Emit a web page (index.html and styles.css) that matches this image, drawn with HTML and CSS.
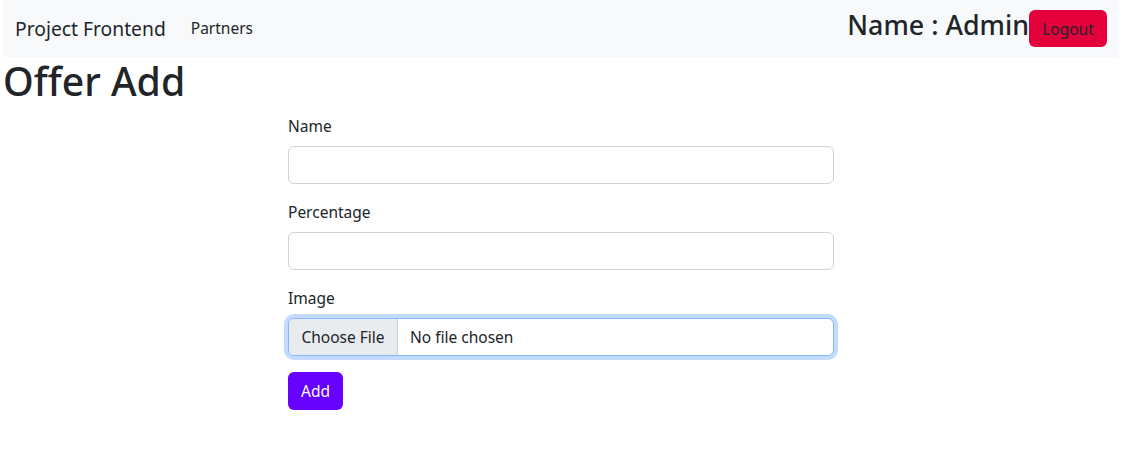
FILE: index.html
```html
<!DOCTYPE html>
<html lang="en">
<head>
<meta charset="utf-8">
<title>Offer Add</title>
<link rel="stylesheet" href="styles.css">
</head>
<body>
<div class="page">
  <nav class="navbar">
    <div class="nav-left">
      <a class="brand" href="#">Project Frontend</a>
      <a class="nav-link" href="#">Partners</a>
    </div>
    <div class="nav-right">
      <h3 class="user-name">Name : Admin</h3>
      <button class="btn btn-logout" type="button">Logout</button>
    </div>
  </nav>
  <h1 class="title">Offer Add</h1>
  <form class="offer-form">
    <div class="field">
      <label class="form-label">Name</label>
      <div class="form-control"></div>
    </div>
    <div class="field">
      <label class="form-label">Percentage</label>
      <div class="form-control"></div>
    </div>
    <div class="field">
      <label class="form-label">Image</label>
      <div class="form-control file-control">
        <span class="file-btn">Choose File</span>
        <span class="file-name">No file chosen</span>
      </div>
    </div>
    <button class="btn btn-add" type="button">Add</button>
  </form>
</div>
</body>
</html>
```

FILE: styles.css
```css
* { box-sizing: border-box; }

html, body {
  margin: 0;
  padding: 0;
  background: #ffffff;
}

body {
  font-family: "Noto Sans", "Liberation Sans", sans-serif;
  font-size: 15.5px;
  line-height: 1.5;
  color: #212529;
}

.page {
  width: 1116px;
  margin-left: 3px;
}

.navbar {
  height: 57px;
  background: #f8f9fa;
  display: flex;
  align-items: center;
  justify-content: space-between;
  padding: 0 12px;
}

.nav-left {
  display: flex;
  align-items: center;
}

.brand {
  font-size: 19.3px;
  color: #212529;
  text-decoration: none;
  margin-right: 16px;
  line-height: 30px;
}

.nav-link {
  font-size: 15.5px;
  color: #212529;
  text-decoration: none;
  padding: 8px 8px 8px 9px;
}

.nav-right {
  display: flex;
  align-items: center;
}

.user-name {
  margin: 0 0 6px 0;
  font-size: 26.8px;
  font-weight: 500;
  line-height: 1.2;
}

.btn {
  font-family: inherit;
  font-size: 15.5px;
  line-height: 24px;
  padding: 6px 12px;
  border: 1px solid transparent;
  border-radius: 6px;
  cursor: pointer;
}

.btn-logout {
  background: #e4003b;
  color: #212529;
  width: 78px;
  height: 37px;
  padding: 5px 0;
}

.title {
  margin: 0 0 10px 0;
  font-size: 39.2px;
  font-weight: 500;
  line-height: 1.2;
}

.offer-form {
  width: 546px;
  margin: 0 auto;
}

.field {
  margin-bottom: 16px;
}

.form-label {
  display: block;
  margin-bottom: 8px;
  line-height: 24px;
  height: 24px;
}

.form-control {
  height: 38px;
  border: 1px solid #ced4da;
  border-radius: 6px;
  background: #fff;
}

.file-control {
  display: flex;
  align-items: stretch;
  overflow: hidden;
  border-color: #86b7fe;
  box-shadow: 0 0 0 4px rgba(13, 110, 253, 0.25);
}

.file-btn {
  background: #e9ecef;
  padding: 6px 0;
  line-height: 24px;
  border-right: 1px solid #ced4da;
  margin-right: 12px;
  width: 109px;
  text-align: center;
  white-space: nowrap;
}

.file-name {
  line-height: 36px;
  white-space: nowrap;
}

.btn-add {
  background: #6600ff;
  color: #ffffff;
  width: 55px;
  height: 38px;
  padding: 6px 0;
}
```
